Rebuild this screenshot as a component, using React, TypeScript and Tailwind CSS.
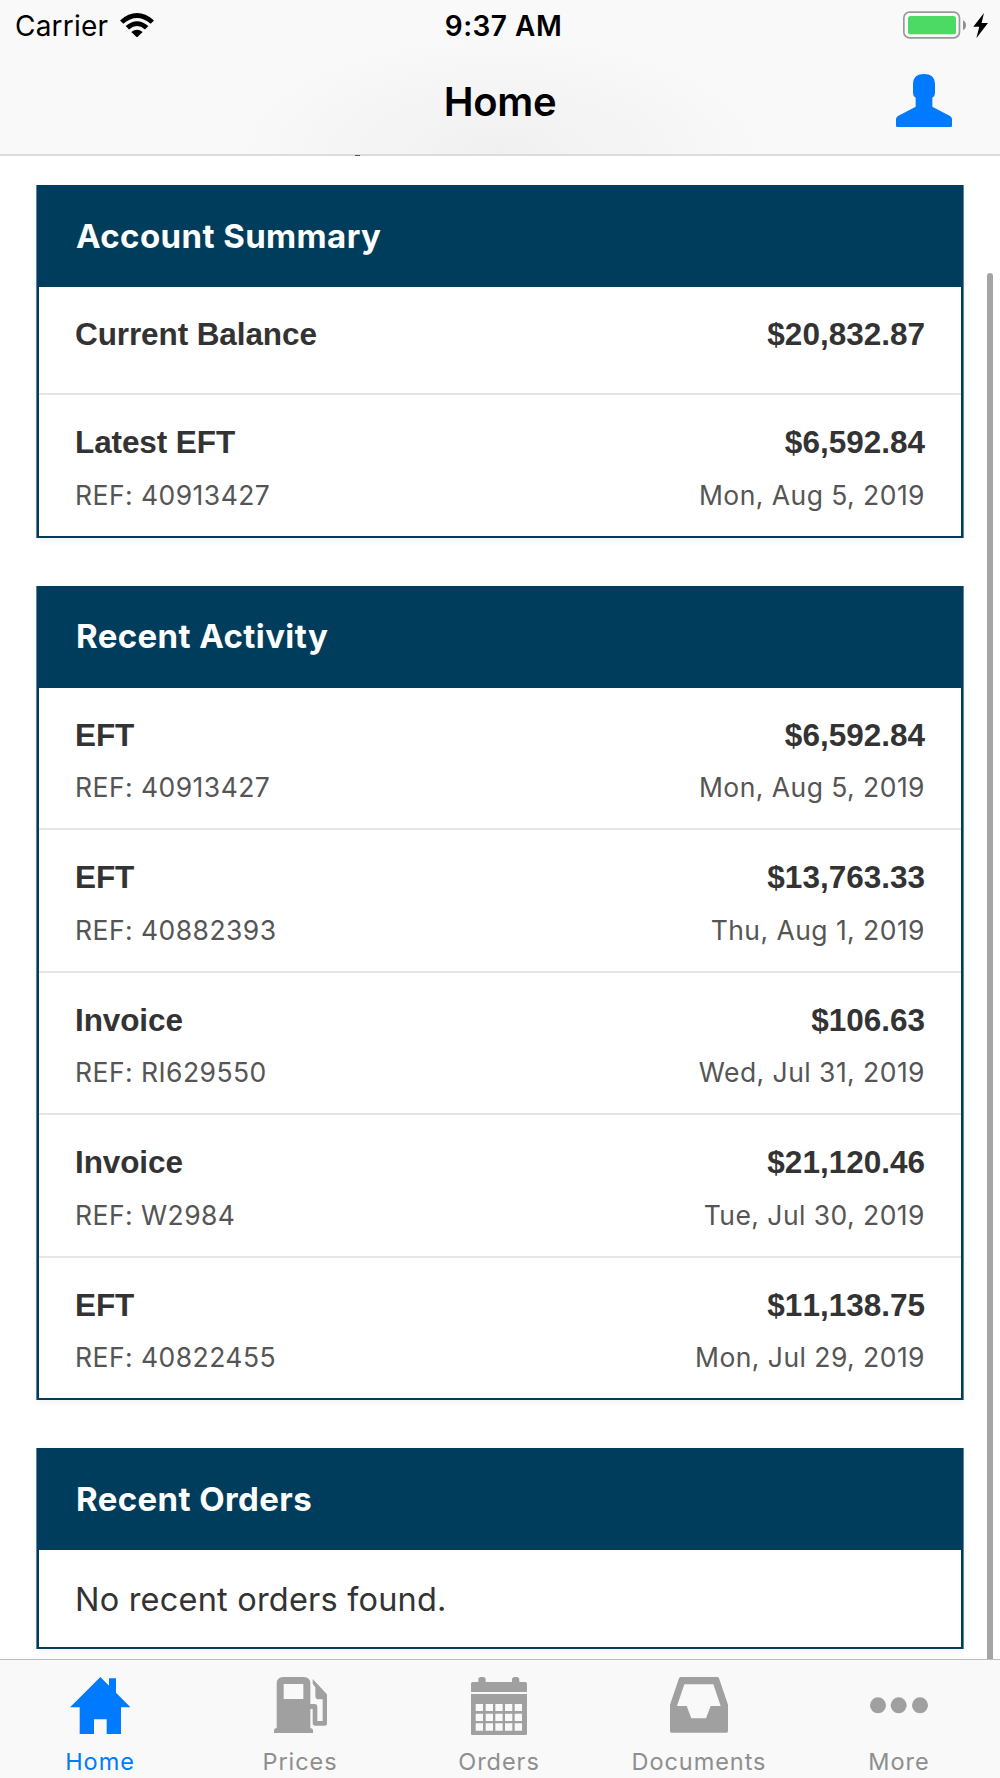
import type { ReactNode } from "react"
import { clsx } from "clsx"

type TEntry = {
  label: string
  amount: string
  reference?: string
  date?: string
}

const summary: TEntry[] = [
  { label: "Current Balance", amount: "$20,832.87" },
  {
    label: "Latest EFT",
    amount: "$6,592.84",
    reference: "REF: 40913427",
    date: "Mon, Aug 5, 2019",
  },
]

const activity: TEntry[] = [
  {
    label: "EFT",
    amount: "$6,592.84",
    reference: "REF: 40913427",
    date: "Mon, Aug 5, 2019",
  },
  {
    label: "EFT",
    amount: "$13,763.33",
    reference: "REF: 40882393",
    date: "Thu, Aug 1, 2019",
  },
  {
    label: "Invoice",
    amount: "$106.63",
    reference: "REF: RI629550",
    date: "Wed, Jul 31, 2019",
  },
  {
    label: "Invoice",
    amount: "$21,120.46",
    reference: "REF: W2984",
    date: "Tue, Jul 30, 2019",
  },
  {
    label: "EFT",
    amount: "$11,138.75",
    reference: "REF: 40822455",
    date: "Mon, Jul 29, 2019",
  },
]

const WifiIcon = () => (
  <svg viewBox="0 0 102 73" className="h-[24.5px] w-[34px]">
    <path d="M0 22Q51-22 102 22L92 32Q51-3 10 32Z" />
    <path d="M17 39Q51 10 85 39L75 49Q51 29 27 49Z" />
    <path d="M34 57Q51 43 68 57L51 73Z" />
  </svg>
)

const BatteryIcon = () => (
  <svg viewBox="0 0 256 84" className="h-[28px] w-[85.3px]">
    <rect
      x="2.5"
      y="3.5"
      width="167"
      height="77"
      rx="17"
      fill="none"
      stroke="#999"
      strokeWidth="5"
    />
    <rect x="15" y="15" width="144" height="55" rx="8" fill="#4cd964" />
    <path d="M180 28q9 5 9 15t-9 15z" fill="#8e8e8e" />
    <path d="M243 6L211 47H229L220 82L255 36H236Z" />
  </svg>
)

const PersonIcon = () => (
  <svg viewBox="0 0 168 159" className="h-[53px] w-[56px] fill-[#007aff]">
    <path d="M51 32C51 8 65 0 84 0S117 8 117 32V58Q117 67 109 71V98L162 126Q168 130 168 135V155Q168 159 164 159H4Q0 159 0 155V135Q0 130 6 126L59 98V71Q51 67 51 58Z" />
  </svg>
)

const HomeIcon = () => (
  <svg viewBox="0 0 182 172" className="h-[57.3px] w-[60.7px] fill-current">
    <path d="M91 0L117 26V4H138V47L182 91H153V172H110V127H72V172H29V91H0Z" />
  </svg>
)

const FuelIcon = () => (
  <svg viewBox="0 0 161 168" className="ml-px h-[56px] w-[53.7px] fill-current">
    <path
      fillRule="evenodd"
      d="M28 0H89Q109 0 109 20V153Q117 154 117 160V168H0V160Q0 154 8 153V20Q8 0 28 0ZM29 21V66H88V21Z"
    />
    <path d="M108 81H122Q130 81 130 89V132H146V67H135Q124 67 124 56V31L116 20V6L156 49Q160 53 160 59V138Q160 146 152 146H124Q116 146 116 138V96H108Z" />
  </svg>
)

const CalendarIcon = () => (
  <svg viewBox="0 0 168 175" className="mr-[2px] h-[58.3px] w-[56px] fill-current">
    <rect x="22" width="22" height="24" rx="8" />
    <rect x="123" width="22" height="24" rx="8" />
    <path d="M5 15H163Q168 15 168 20V45H0V20Q0 15 5 15Z" />
    <path
      fillRule="evenodd"
      d="M0 51H168V170Q168 175 163 175H5Q0 175 0 170ZM14 81V102H36V81ZM44 81V102H66V81ZM73 81V102H95V81ZM102 81V102H124V81ZM131 81V102H153V81ZM14 110V132H36V110ZM44 110V132H66V110ZM73 110V132H95V110ZM102 110V132H124V110ZM131 110V132H153V110ZM14 139V161H36V139ZM44 139V161H66V139ZM73 139V161H95V139ZM102 139V161H124V139ZM131 139V161H153V139Z"
    />
  </svg>
)

const TrayIcon = () => (
  <svg viewBox="0 0 174 167" className="mr-[2px] h-[55.7px] w-[58px] fill-current">
    <path
      fillRule="evenodd"
      d="M34 0H141Q146 0 147 4L174 83V163Q174 167 170 167H4Q0 167 0 163V83L27 4Q29 0 34 0ZM43 22L21 87H50L64 124H108L122 87H152L130 22Z"
    />
  </svg>
)

const MoreIcon = () => (
  <svg viewBox="0 0 174 167" className="mr-[2px] h-[55.7px] w-[58px] fill-current">
    <circle cx="24" cy="85" r="24" />
    <circle cx="86" cy="85" r="24" />
    <circle cx="150" cy="85" r="24" />
  </svg>
)

const tabs = [
  { name: "Home", Icon: HomeIcon },
  { name: "Prices", Icon: FuelIcon },
  { name: "Orders", Icon: CalendarIcon },
  { name: "Documents", Icon: TrayIcon },
  { name: "More", Icon: MoreIcon },
]

const Card = ({ title, children }: { title: string; children: ReactNode }) => (
  <section className="border-2 border-t-0 border-[#003d5c] bg-white shadow-[-1px_0_0_#5f8599,1px_0_0_#5f8599,0_3px_7px_rgba(0,0,0,0.05)]">
    <h2 className="flex h-[102px] items-center bg-[#003d5c] pt-px pl-[37px] text-[33px] font-bold tracking-[0.4px] text-white">
      {title}
    </h2>
    {children}
  </section>
)

const Row = ({ entry, isLast }: { entry: TEntry; isLast: boolean }) => (
  <div
    className={clsx(
      "px-[36px] pt-[29px]",
      !isLast && "border-b-2 border-[#e5e5e5]",
      !entry.reference ? "h-[108px]" : isLast ? "h-[140.6px]" : "h-[142.5px]"
    )}
  >
    <div className="flex justify-between font-['Liberation_Sans',Arial,sans-serif] text-[31.5px] leading-[36px] font-bold text-[#333] [font-kerning:none]">
      <span className="tracking-[-0.1px]">{entry.label}</span>
      <span>{entry.amount}</span>
    </div>
    {entry.reference && (
      <div className="mt-[18.5px] flex justify-between text-[26.5px] leading-[32px] tracking-[0.45px] text-[#555]">
        <span>{entry.reference}</span>
        <span>{entry.date}</span>
      </div>
    )}
  </div>
)

const App = () => {
  return (
    <div className="relative flex h-[1778px] w-[1000px] flex-col overflow-hidden bg-white font-['Inter','Liberation_Sans',sans-serif] text-black">
      <header className="h-[156px] shrink-0 border-b-2 border-[#dcdcdc] bg-[#f9f9f9] bg-[radial-gradient(ellipse_270px_120px_at_50%_100%,#f0f0f0,#f9f9f9)]">
        <div className="grid h-[50px] grid-cols-3 items-center">
          <div className="flex items-center gap-[12px] pl-[15px] text-[28px] tracking-[0.2px]">
            <span className="pt-px">Carrier</span>
            <WifiIcon />
          </div>
          <span className="pt-px pl-[7px] text-center text-[28px] font-semibold tracking-[0.5px]">
            9:37 AM
          </span>
          <div className="flex justify-end pr-[12px]">
            <BatteryIcon />
          </div>
        </div>
        <div className="grid h-[104px] grid-cols-3 items-center">
          <h1 className="col-start-2 text-center text-[40px] font-semibold tracking-[-0.3px]">
            Home
          </h1>
          <div className="flex justify-end pr-[48px] pb-[4px]">
            <PersonIcon />
          </div>
        </div>
      </header>

      {/* descender of the heading scrolled under the bar */}
      <div className="absolute top-[155px] left-[355px] h-px w-[5px] bg-[#555]" />

      <main className="flex grow flex-col gap-[48px] px-[37px] pt-[29px]">
        <Card title="Account Summary">
          {summary.map((entry, index) => (
            <Row
              key={entry.label}
              entry={entry}
              isLast={index === summary.length - 1}
            />
          ))}
        </Card>
        <Card title="Recent Activity">
          {activity.map((entry, index) => (
            <Row
              key={index}
              entry={entry}
              isLast={index === activity.length - 1}
            />
          ))}
        </Card>
        <Card title="Recent Orders">
          <p className="flex h-[96.5px] items-center pt-[3px] pl-[36px] text-[32.5px] tracking-[0.2px] text-[#333]">
            No recent orders found.
          </p>
        </Card>
      </main>

      <div className="absolute top-[273px] left-[987px] h-[1386px] w-[6px] rounded-t-full bg-[#a5a5a5]" />

      <nav className="absolute inset-x-0 bottom-0 grid h-[119px] grid-cols-5 border-t border-[#bebebe] bg-[#f9f9f9]">
        {tabs.map(({ name, Icon }) => (
          <div
            key={name}
            className={clsx(
              "flex flex-col items-center pt-[17px]",
              name === "Home" ? "text-[#007aff]" : "text-[#a0a0a0]"
            )}
          >
            <div className="h-[71px]">
              <Icon />
            </div>
            <span
              className={clsx(
                "text-[23.5px] leading-[28px] tracking-[0.95px]",
                name !== "Home" && "text-[#8e8e8e]",
                !["Home", "Prices"].includes(name) && "pr-[2px]"
              )}
            >
              {name}
            </span>
          </div>
        ))}
      </nav>
    </div>
  )
}

export default App
